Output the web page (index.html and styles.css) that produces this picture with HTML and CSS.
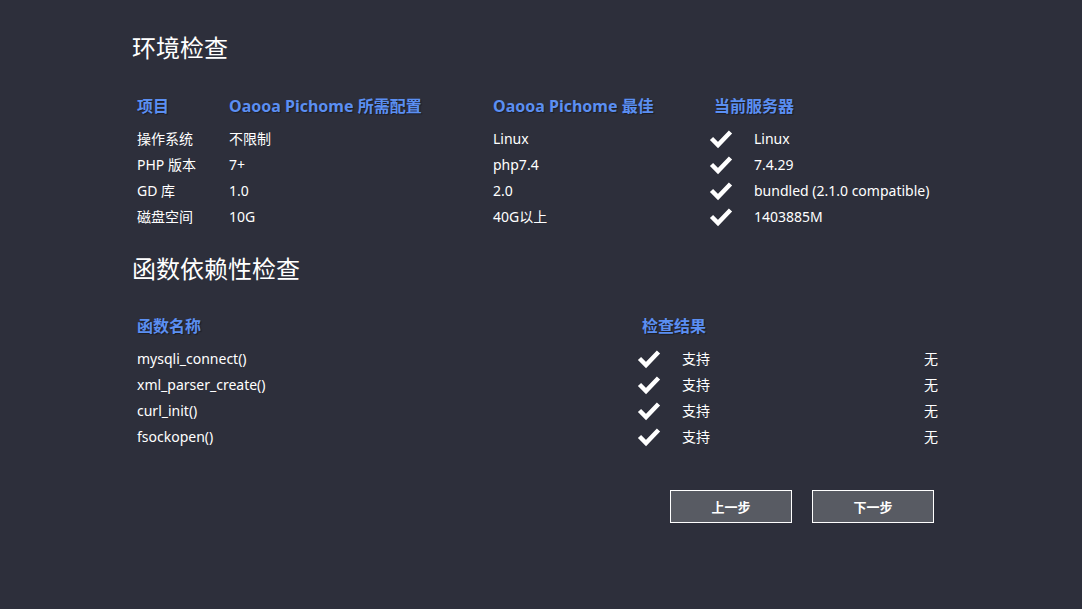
FILE: index.html
```html
<!DOCTYPE html>
<html lang="zh-CN">
<head>
  <meta charset="UTF-8">
  <meta name="viewport" content="width=device-width, initial-scale=1.0">
  <title>Pichome 安装 - 环境检查</title>
  <link rel="stylesheet" href="styles.css">
</head>
<body>
  <div class="wrap">
    <h2 class="title">环境检查</h2>

    <!-- server environment -->
    <table class="check env">
      <colgroup>
        <col style="width:92px">
        <col style="width:264px">
        <col style="width:221px">
        <col style="width:40px">
        <col>
      </colgroup>
      <tr>
        <th>项目</th>
        <th>Oaooa Pichome 所需配置</th>
        <th>Oaooa Pichome 最佳</th>
        <th colspan="2">当前服务器</th>
      </tr>
      <tr>
        <td>操作系统</td>
        <td>不限制</td>
        <td>Linux</td>
        <td class="ok"><svg viewBox="0 0 24 20" width="24" height="20"><polyline points="2.5,9.5 9,16 21.5,3" /></svg></td>
        <td>Linux</td>
      </tr>
      <tr>
        <td>PHP 版本</td>
        <td>7+</td>
        <td>php7.4</td>
        <td class="ok"><svg viewBox="0 0 24 20" width="24" height="20"><polyline points="2.5,9.5 9,16 21.5,3" /></svg></td>
        <td>7.4.29</td>
      </tr>
      <tr>
        <td>GD 库</td>
        <td>1.0</td>
        <td>2.0</td>
        <td class="ok"><svg viewBox="0 0 24 20" width="24" height="20"><polyline points="2.5,9.5 9,16 21.5,3" /></svg></td>
        <td>bundled (2.1.0 compatible)</td>
      </tr>
      <tr>
        <td>磁盘空间</td>
        <td>10G</td>
        <td>40G以上</td>
        <td class="ok"><svg viewBox="0 0 24 20" width="24" height="20"><polyline points="2.5,9.5 9,16 21.5,3" /></svg></td>
        <td>1403885M</td>
      </tr>
    </table>

    <h2 class="title second">函数依赖性检查</h2>

    <!-- php functions -->
    <table class="check funcs">
      <colgroup>
        <col style="width:505px">
        <col style="width:40px">
        <col>
        <col>
      </colgroup>
      <tr>
        <th>函数名称</th>
        <th colspan="3">检查结果</th>
      </tr>
      <tr>
        <td>mysqli_connect()</td>
        <td class="ok"><svg viewBox="0 0 24 20" width="24" height="20"><polyline points="2.5,9.5 9,16 21.5,3" /></svg></td>
        <td>支持</td>
        <td class="note">无</td>
      </tr>
      <tr>
        <td>xml_parser_create()</td>
        <td class="ok"><svg viewBox="0 0 24 20" width="24" height="20"><polyline points="2.5,9.5 9,16 21.5,3" /></svg></td>
        <td>支持</td>
        <td class="note">无</td>
      </tr>
      <tr>
        <td>curl_init()</td>
        <td class="ok"><svg viewBox="0 0 24 20" width="24" height="20"><polyline points="2.5,9.5 9,16 21.5,3" /></svg></td>
        <td>支持</td>
        <td class="note">无</td>
      </tr>
      <tr>
        <td>fsockopen()</td>
        <td class="ok"><svg viewBox="0 0 24 20" width="24" height="20"><polyline points="2.5,9.5 9,16 21.5,3" /></svg></td>
        <td>支持</td>
        <td class="note">无</td>
      </tr>
    </table>

    <div class="actions">
      <button class="btn" type="button">上一步</button>
      <button class="btn" type="button">下一步</button>
    </div>
  </div>
</body>
</html>
```

FILE: styles.css
```css
/* Page */
body {
  margin: 0;
  background-color: #2d2f3b;
  color: #fff;
  font-family: "Noto Sans", "Noto Sans CJK SC", sans-serif;
  font-size: 14px;
}

.wrap {
  width: 818px;
  margin: 0 auto;
  padding-top: 33px;
}

/* Section titles */
.title {
  margin: 0;
  font-size: 24px;
  font-weight: normal;
  line-height: 30px;
}

.title.second {
  margin-top: 24px;
}

/* Check tables */
.check {
  width: 100%;
  margin-top: 30px;
  border-collapse: collapse;
  table-layout: fixed;
}

.check.funcs {
  margin-top: 29px;
}

.check th {
  padding: 0 0 9px 5px;
  height: 24px;
  text-align: left;
  vertical-align: middle;
  color: #5b8ff2;
  font-size: 16px;
  font-weight: bold;
  text-shadow: 1px 1px 1px rgba(0, 0, 0, 0.4);
  white-space: nowrap;
}

.check td {
  padding: 0 0 0 5px;
  height: 26px;
  line-height: 26px;
  vertical-align: middle;
  white-space: nowrap;
}

.check td.ok {
  padding: 0;
  line-height: 0;
}

.check td.ok svg {
  display: block;
}

.check td.ok polyline {
  fill: none;
  stroke: #fff;
  stroke-width: 4.5;
}

.check td.note {
  text-align: right;
  padding-right: 12px;
}

/* Navigation buttons */
.actions {
  display: flex;
  justify-content: flex-end;
  gap: 20px;
  margin-top: 40px;
  padding-right: 16px;
}

.btn {
  width: 122px;
  height: 33px;
  background-color: #585b63;
  border: 1px solid #fff;
  color: #fff;
  font-family: "Noto Sans CJK SC", sans-serif;
  font-size: 13px;
  font-weight: bold;
  cursor: pointer;
}
```
